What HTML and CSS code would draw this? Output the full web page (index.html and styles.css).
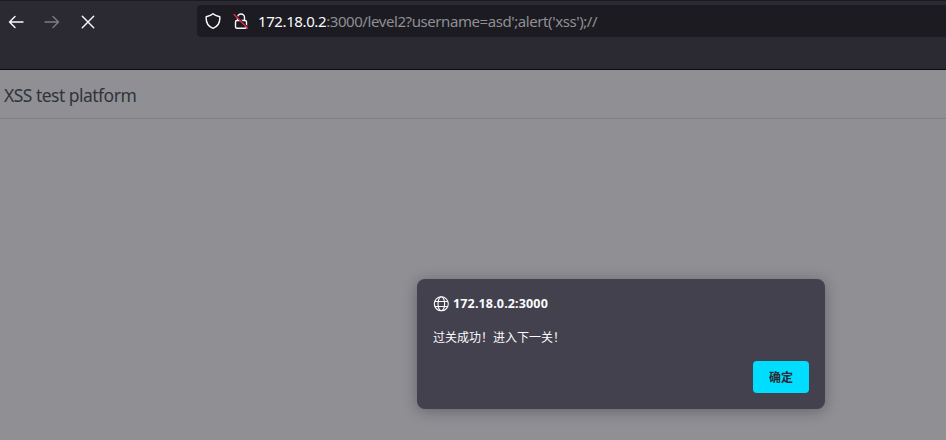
FILE: index.html
```html
<!DOCTYPE html>
<html lang="zh-CN">
<head>
<meta charset="utf-8">
<title>XSS test platform</title>
<link rel="stylesheet" href="styles.css">
</head>
<body>
<header class="chrome">
  <div class="toolbar">
    <nav class="nav">
      <svg class="icon" viewBox="0 0 16 16"><path d="M15 8H1.5M7 2.5 1.5 8 7 13.5"/></svg>
      <svg class="icon disabled" viewBox="0 0 16 16"><path d="M1 8h13.5M9 2.5 14.500 8 9 13.500"/></svg>
      <svg class="icon" viewBox="0 0 16 16"><path d="M2.300 2.300 13.700 13.700M13.700 2.300 2.300 13.700"/></svg>
    </nav>
    <div class="urlbar">
      <svg class="icon" viewBox="0 0 16 16"><path d="M8 .8C6.500 2.300 3.500 3.200 1.200 3.700C.8 9 3 13.500 8 15.300C13 13.500 15.200 9 14.800 3.700C12.500 3.200 9.500 2.300 8 .8Z"/></svg>
      <svg class="icon lock" viewBox="0 0 16 16"><path d="M4.500 7V4.500a3.500 3.500 0 0 1 7 0V7M4 7.500h8a1.500 1.500 0 0 1 1.500 1.500v4.700a1.500 1.500 0 0 1-1.500 1.500H4a1.500 1.500 0 0 1-1.500-1.500V9A1.500 1.500 0 0 1 4 7.500Z"/><path class="gap" d="M2 1.500 15 14.500"/><path class="slash" d="M1 1.500 14.500 15"/></svg>
      <span class="url"><span class="host">172.18.0.2</span><span class="path">:3000/level2?username=asd';alert('xss');//</span></span>
    </div>
  </div>
</header>
<main class="page">
  <div class="navbar"><span class="brand">XSS test platform</span></div>
  <section class="dialog">
    <div class="origin">
      <svg class="globe" viewBox="0 0 16 16"><circle cx="8.300" cy="7.800" r="7"/><ellipse cx="8.300" cy="7.800" rx="3.300" ry="7"/><path d="M1.800 5.500h13M1.800 10.500h13"/></svg>
      <span class="origin-text">172.18.0.2:3000</span>
    </div>
    <p class="message">过关成功！进入下一关！</p>
    <div class="actions"><button class="ok">确定</button></div>
  </section>
</main>
</body>
</html>
```
FILE: styles.css
```css
* { box-sizing: border-box; }
body {
  margin: 0;
  height: 440px;
  overflow: hidden;
  background: #8f8f94;
  font-family: "Noto Sans", "Noto Sans CJK SC", sans-serif;
}
.chrome {
  height: 70px;
  background: #2b2a33;
  border-top: 1px solid #1c1b22;
  border-bottom: 1px solid #0c0c0d;
}
.toolbar { display: flex; padding-top: 4px; }
.nav {
  display: flex;
  align-items: center;
  gap: 20px;
  width: 197px;
  height: 33px;
  padding-left: 8px;
}
.icon {
  flex: none;
  width: 16px;
  height: 16px;
  fill: none;
  stroke: #fbfbfe;
  stroke-width: 1.4;
  stroke-linecap: round;
  stroke-linejoin: round;
}
.disabled { stroke: #7d7c82; }
.urlbar {
  display: flex;
  flex: 1;
  align-items: center;
  height: 32px;
  padding-left: 8px;
  background: #1c1b22;
  border-radius: 4px 0 0 4px;
}
.lock { margin-left: 12px; }
.gap { stroke: #1c1b22; }
.slash { stroke: #e22850; }
.url {
  margin-left: 9px;
  font-size: 15px;
  line-height: 30px;
  white-space: pre;
}
.host { color: #fbfbfe; letter-spacing: -0.4px; }
.path { color: #8f8f94; letter-spacing: -0.42px; }
.navbar {
  display: flex;
  align-items: center;
  height: 49px;
  padding: 2px 4px 0;
  border-bottom: 1px solid #7f7f84;
}
.brand {
  color: #30343a;
  font-size: 17.5px;
  letter-spacing: -0.52px;
}
.dialog {
  width: 408px;
  height: 130px;
  margin: 160px 0 0 417px;
  padding: 16px;
  background: #42414d;
  border-radius: 8px;
  box-shadow: 0 2px 14px rgba(20, 20, 30, .35);
  color: #fbfbfe;
}
.origin { display: flex; align-items: center; gap: 4px; height: 17px; }
.globe {
  width: 16px;
  height: 16px;
  fill: none;
  stroke: #fbfbfe;
  stroke-width: 1.1;
}
.origin-text { font-size: 12.5px; font-weight: 700; line-height: 16px; letter-spacing: 0.15px; }
.message {
  margin: 16px 0 0;
  font-family: "Noto Sans CJK SC", sans-serif;
  font-size: 12px;
  line-height: 18px;
}
.actions { display: flex; justify-content: flex-end; margin-top: 15px; }
.ok {
  width: 56px;
  height: 32px;
  padding: 0 0 2px;
  border: 0;
  border-radius: 4px;
  background: #00ddff;
  color: #2b2a33;
  font: 700 12px "Noto Sans CJK SC", sans-serif;
}
```
